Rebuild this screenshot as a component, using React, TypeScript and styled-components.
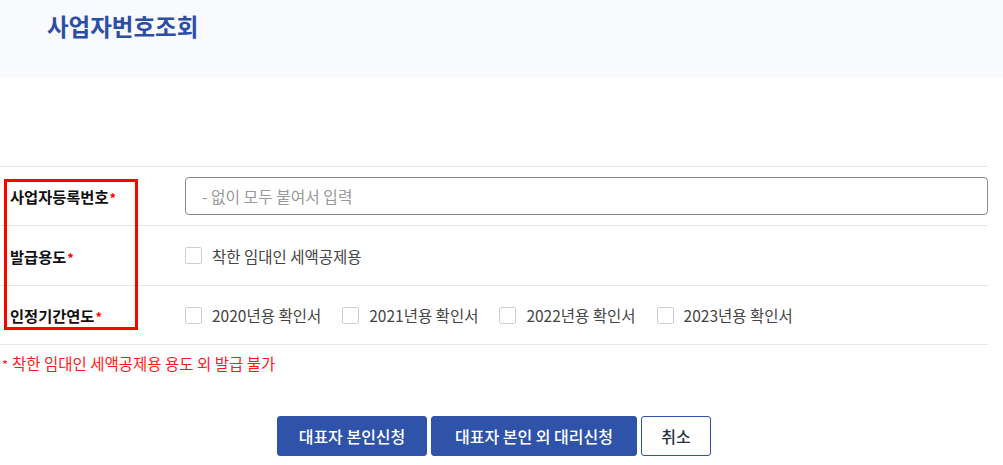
import React from "react";
import styled, { createGlobalStyle } from "styled-components";

const Global = createGlobalStyle`
  html, body { margin: 0; padding: 0; background: #fff; }
  body { font-family: "Noto Sans CJK KR", "Noto Sans", sans-serif; color: #222; }
  * { box-sizing: border-box; }
`;

const Page = styled.div`
  width: 1003px;
  height: 465px;
  overflow: hidden;
`;

const Header = styled.header`
  height: 78px;
  background: #f9fafd;
  padding: 8px 0 0 47px;
`;

const Title = styled.h1`
  margin: 0;
  font-size: 23.5px;
  font-weight: 700;
  color: #2d4ea6;
  line-height: 36px;
`;

const Content = styled.div`
  width: 988px;
  padding-top: 88px;
`;

const Table = styled.div`
  position: relative;
  border-top: 1px solid #e6e6e6;
`;

const Row = styled.div<{ $h: number }>`
  display: grid;
  grid-template-columns: 185px 1fr;
  align-items: center;
  height: ${(p) => p.$h}px;
  border-bottom: 1px solid #e6e6e6;
`;

const Label = styled.div`
  padding-left: 10px;
  font-size: 15.3px;
  font-weight: 700;
  color: #111;
`;

const Star = styled.span`
  color: #ff0000;
  font-size: 13px;
  font-weight: 700;
  margin-left: 1px;
`;

const Input = styled.input`
  width: 803px;
  height: 38px;
  border: 1px solid #8a8a8a;
  border-radius: 4px;
  padding: 0 0 0 16px;
  font-family: inherit;
  font-size: 15.8px;
  color: #333;
  outline: none;
  &::placeholder { color: #999; }
`;

const Checks = styled.div`
  display: flex;
  gap: 21px;
`;

const Check = styled.label`
  display: flex;
  align-items: center;
  gap: 10px;
  font-size: 15.5px;
  color: #444;
`;

const Box = styled.span`
  width: 17px;
  height: 17px;
  border: 1px solid #cfcfcf;
  border-radius: 2px;
  background: #fff;
  flex: none;
`;

const Highlight = styled.div`
  position: absolute;
  left: 4px;
  top: 12px;
  width: 134px;
  height: 151px;
  border: 3px solid #ff0000;
  pointer-events: none;
`;

const Note = styled.p`
  margin: 0;
  padding: 7px 0 0 2px;
  font-size: 15.5px;
  color: #ff1a1a;
  line-height: 22px;
`;

const SmallStar = styled.span`
  font-size: 13px;
  margin-right: 4px;
`;

const Buttons = styled.div`
  display: flex;
  justify-content: center;
  gap: 4px;
  margin-top: 40px;
`;

const Btn = styled.button<{ $w: number; $ghost?: boolean }>`
  width: ${(p) => p.$w}px;
  height: 40px;
  border-radius: 3px;
  border: 1px solid #2f53a8;
  background: ${(p) => (p.$ghost ? "#fff" : "#2f53a8")};
  color: ${(p) => (p.$ghost ? "#27304a" : "#fff")};
  font-family: inherit;
  font-size: 16px;
  font-weight: 500;
  padding: 0;
  cursor: pointer;
`;

const years = [2020, 2021, 2022, 2023];

export default function App() {
  return (
    <Page>
      <Global />
      <Header>
        <Title>사업자번호조회</Title>
      </Header>
      <Content>
        <Table>
          <Row $h={59}>
            <Label>사업자등록번호<Star>*</Star></Label>
            <Input placeholder="- 없이 모두 붙여서 입력" />
          </Row>
          <Row $h={60}>
            <Label>발급용도<Star>*</Star></Label>
            <Checks>
              <Check><Box />착한 임대인 세액공제용</Check>
            </Checks>
          </Row>
          <Row $h={59}>
            <Label>인정기간연도<Star>*</Star></Label>
            <Checks>
              {years.map((y) => (
                <Check key={y}><Box />{y}년용 확인서</Check>
              ))}
            </Checks>
          </Row>
          <Highlight />
        </Table>
        <Note><SmallStar>*</SmallStar>착한 임대인 세액공제용 용도 외 발급 불가</Note>
        <Buttons>
          <Btn $w={150}>대표자 본인신청</Btn>
          <Btn $w={206}>대표자 본인 외 대리신청</Btn>
          <Btn $w={70} $ghost>취소</Btn>
        </Buttons>
      </Content>
    </Page>
  );
}
